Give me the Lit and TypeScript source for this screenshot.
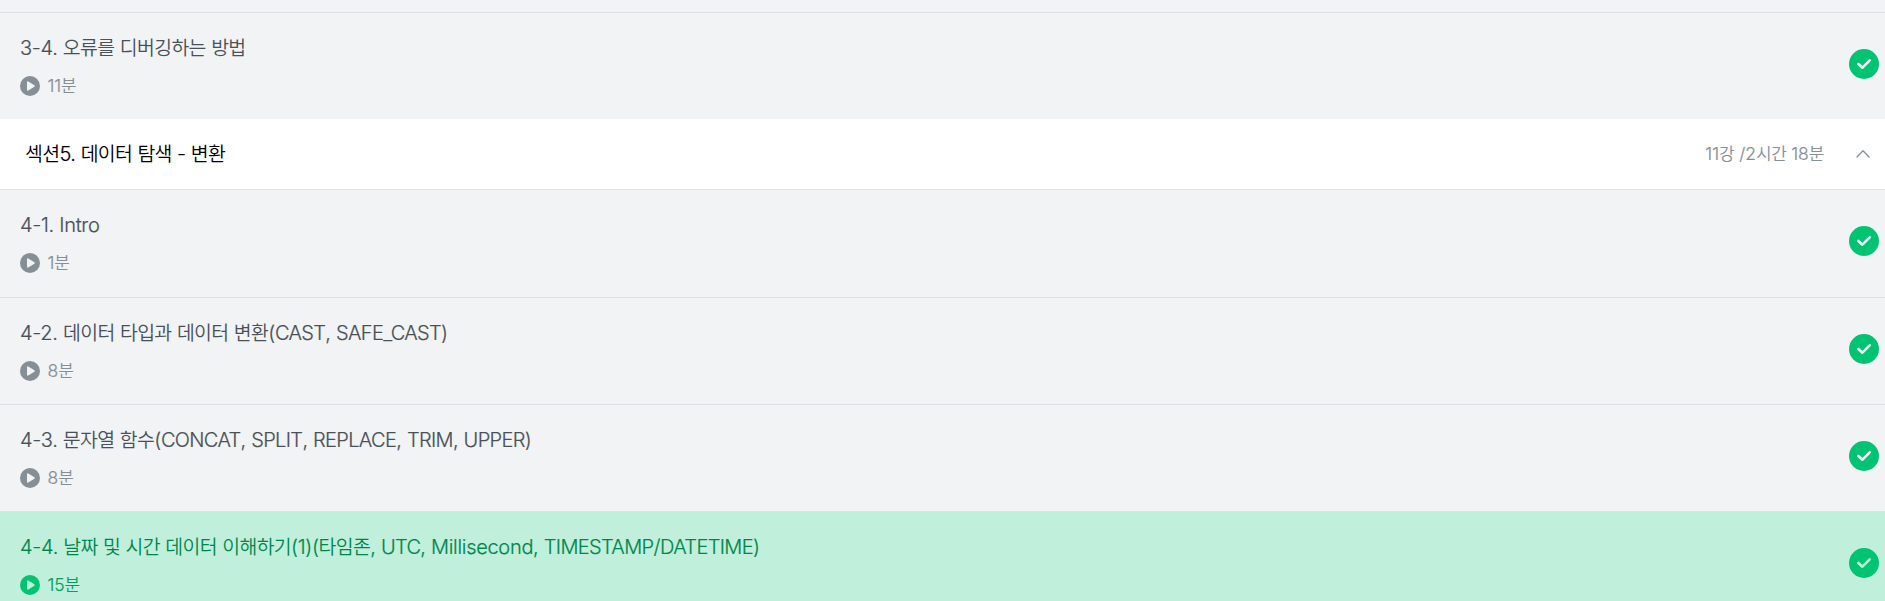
import { LitElement, html, css, svg } from "lit";
import { customElement, property } from "lit/decorators.js";

interface Lesson {
  title: string;
  time: string;
  active?: boolean;
}

const RUNS = /([\uac00-\ud7a3]+|[A-Z_]{2,})/;

const runClass = (part: string) => {
  if (/[\uac00-\ud7a3]/.test(part)) return "ko";
  return RUNS.test(part) ? "caps" : "la";
};

/** Splits a string so Hangul, capitals and other Latin get their own font metrics. */
const runs = (text: string) =>
  text
    .split(RUNS)
    .filter((part) => part !== "")
    .map((part) => html`<span class=${runClass(part)}>${part}</span>`);

const textStyles = css`
  .text {
    white-space: pre;
    font-family: Inter, "Noto Sans CJK KR", sans-serif;
    font-weight: 300;
  }
  .la,
  .caps {
    -webkit-text-stroke: 0.2px currentColor;
  }
  .la {
    letter-spacing: -0.015em;
  }
  .caps {
    letter-spacing: -0.033em;
  }
  .ko {
    font-family: "Noto Sans CJK KR", sans-serif;
    font-size: 0.97em;
    font-weight: 350;
    line-height: 1;
    letter-spacing: -0.033em;
  }
`;

@customElement("lesson-row")
export class LessonRow extends LitElement {
  @property({ attribute: false }) lesson!: Lesson;

  static styles = [
    textStyles,
    css`
      :host {
        display: block;
      }
      .row {
        box-sizing: border-box;
        height: 107px;
        display: flex;
        justify-content: space-between;
        padding: 0 6px 0 20px;
        border-top: 1px solid #dee2e6;
        background: #f1f3f5;
        color: #495057;
      }
      .info {
        display: flex;
        flex-direction: column;
        padding-top: 20px;
        gap: 13px;
      }
      .title {
        height: 30px;
        line-height: 30px;
        font-size: 20px;
      }
      .meta {
        display: flex;
        align-items: center;
        gap: 7.5px;
        height: 20px;
        color: #868e96;
      }
      .time {
        font-size: 17.5px;
        height: 20px;
        line-height: 20px;
      }
      .time .la {
        letter-spacing: -0.005em;
      }
      .play,
      .check {
        display: block;
        flex: none;
      }
      .play {
        width: 20px;
        height: 20px;
        fill: #868e96;
      }
      .check {
        width: 30px;
        height: 30px;
        margin-top: 36px;
        fill: #00c471;
      }
      .row .hole {
        fill: #f1f3f5;
      }
      .row .tick {
        fill: none;
        stroke: #f8f9fa;
        stroke-width: 2.6;
        stroke-linecap: round;
        stroke-linejoin: round;
      }
      .active {
        background: #c0f0dc;
        color: #00854d;
      }
      .active .play {
        fill: #00c471;
      }
      .active .time {
        color: #00a05e;
      }
      .active .hole {
        fill: #c0f0dc;
      }
      .active .tick {
        stroke: #c0f0dc;
      }
    `,
  ];

  render() {
    const { title, time, active } = this.lesson;
    return html`
      <div class="row ${active ? "active" : ""}">
        <div class="info">
          <div class="text title">${runs(title)}</div>
          <div class="meta">
            <svg class="play" viewBox="0 0 20 20">
              <circle cx="10" cy="10" r="10" />
              <path class="hole" d="M7 6.2c0-.7.7-1.1 1.3-.8l6.1 3.9c.5.3.5 1.1 0 1.4l-6.1 3.9c-.6.3-1.3-.1-1.3-.8z" />
            </svg>
            <span class="text time">${runs(time)}</span>
          </div>
        </div>
        <svg class="check" viewBox="0 0 30 30">
          <circle cx="15" cy="15" r="15" />
          <path class="tick" d="M9.4 15l4 3.7 7.3-7.4" />
        </svg>
      </div>
    `;
  }
}

@customElement("app-root")
export class AppRoot extends LitElement {
  static styles = [
    textStyles,
    css`
      :host {
        display: block;
        height: 601px;
        overflow: hidden;
        background: #f1f3f5;
      }
      .previous {
        height: 12px;
      }
      .section {
        box-sizing: border-box;
        height: 70px;
        display: flex;
        align-items: center;
        padding: 0 15px 0 25px;
        background: #fff;
      }
      .name {
        flex: 1;
        font-size: 20px;
        height: 30px;
        line-height: 30px;
        color: #000;
      }
      .name .la {
        letter-spacing: -0.023em;
      }
      .summary {
        font-size: 17.5px;
        height: 26px;
        line-height: 26px;
        color: #868e96;
      }
      .summary .la {
        letter-spacing: -0.001em;
      }
      .summary .ko {
        letter-spacing: -0.025em;
      }
      .chevron {
        width: 14px;
        height: 10px;
        margin-left: 32px;
        fill: none;
        stroke: #868e96;
        stroke-width: 1.3;
        stroke-linecap: round;
        stroke-linejoin: round;
      }
      .first {
        padding-bottom: 1px;
      }
    `,
  ];

  private before: Lesson = { title: "3-4. 오류를 디버깅하는 방법", time: "11분" };

  private lessons: Lesson[] = [
    { title: "4-1. Intro", time: "1분" },
    { title: "4-2. 데이터 타입과 데이터 변환(CAST, SAFE_CAST)", time: "8분" },
    { title: "4-3. 문자열 함수(CONCAT, SPLIT, REPLACE, TRIM, UPPER)", time: "8분" },
    {
      title: "4-4. 날짜 및 시간 데이터 이해하기(1)(타임존, UTC, Millisecond, TIMESTAMP/DATETIME)",
      time: "15분",
      active: true,
    },
  ];

  render() {
    return html`
      <div class="previous"></div>
      <lesson-row .lesson=${this.before}></lesson-row>
      <div class="section">
        <span class="text name">${runs("섹션5. 데이터 탐색 - 변환")}</span>
        <span class="text summary">${runs("11강 /2시간 18분")}</span>
        <svg class="chevron" viewBox="0 0 14 10">${svg`<path d="M1 8l6-6.2 6 6.2" />`}</svg>
      </div>
      ${this.lessons.map(
        (lesson, i) => html`<lesson-row class=${i === 0 ? "first" : ""} .lesson=${lesson}></lesson-row>`,
      )}
    `;
  }
}
